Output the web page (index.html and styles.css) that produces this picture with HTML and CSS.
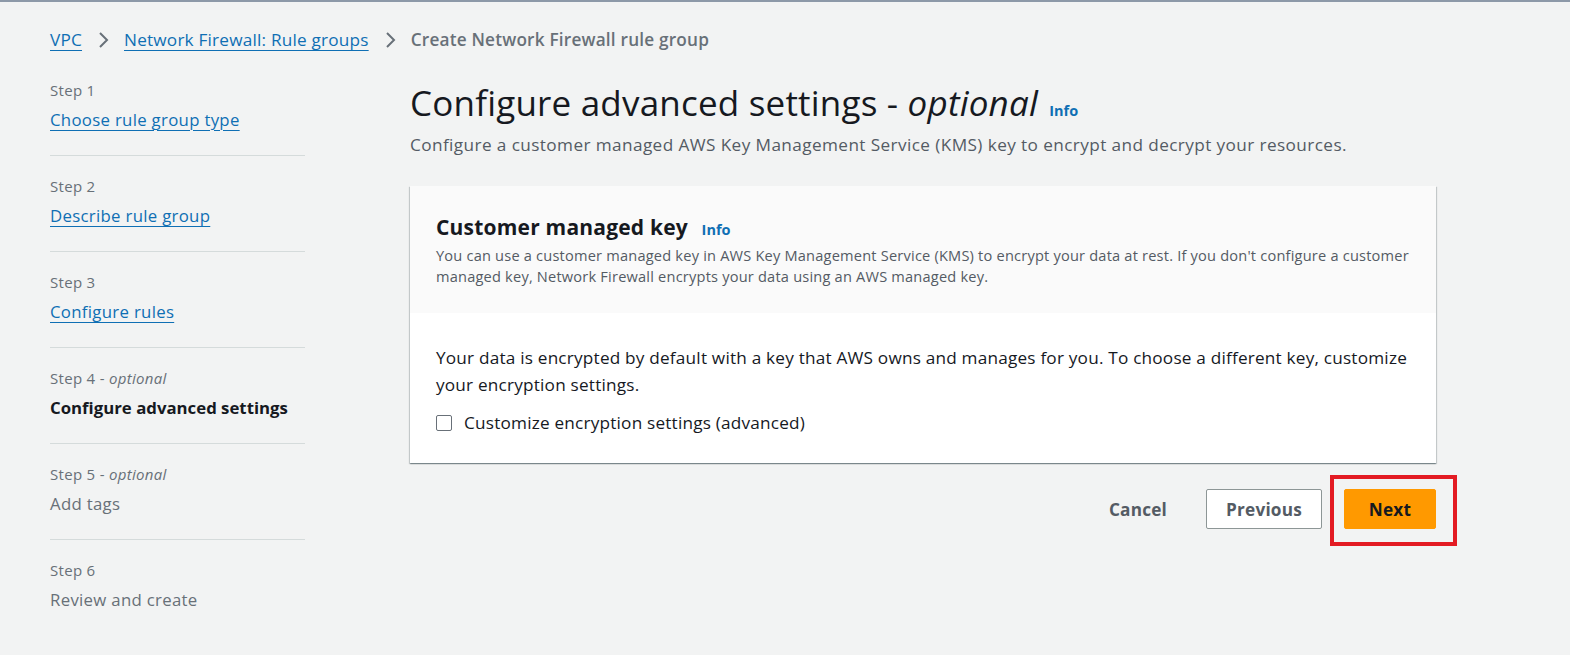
FILE: index.html
```html
<!DOCTYPE html>
<html lang="en">
<head>
<meta charset="utf-8">
<title>Create Network Firewall rule group</title>
<link rel="stylesheet" href="styles.css">
</head>
<body>
<div class="page">
  <nav class="crumbs">
    <a class="crumb-link" href="#">VPC</a>
    <svg class="chev" width="12" height="18" viewBox="0 0 12 18"><path d="M2 2l7 7-7 7" fill="none" stroke="#687078" stroke-width="2"/></svg>
    <a class="crumb-link" href="#">Network Firewall: Rule groups</a>
    <svg class="chev" width="12" height="18" viewBox="0 0 12 18"><path d="M2 2l7 7-7 7" fill="none" stroke="#687078" stroke-width="2"/></svg>
    <span class="crumb-current">Create Network Firewall rule group</span>
  </nav>
  <div class="layout">
    <ul class="steps">
      <li class="step"><div class="step-label">Step 1</div><a class="step-link" href="#">Choose rule group type</a></li>
      <li class="step"><div class="step-label">Step 2</div><a class="step-link" href="#">Describe rule group</a></li>
      <li class="step"><div class="step-label">Step 3</div><a class="step-link" href="#">Configure rules</a></li>
      <li class="step"><div class="step-label">Step 4 - <i>optional</i></div><span class="step-current">Configure advanced settings</span></li>
      <li class="step"><div class="step-label">Step 5 - <i>optional</i></div><span class="step-disabled">Add tags</span></li>
      <li class="step"><div class="step-label">Step 6</div><span class="step-disabled">Review and create</span></li>
    </ul>
    <main class="main">
      <h1 class="title">Configure advanced settings - <i>optional</i> <a class="info info-lg" href="#">Info</a></h1>
      <p class="subtitle">Configure a customer managed AWS Key Management Service (KMS) key to encrypt and decrypt your resources.</p>
      <section class="card">
        <div class="card-head">
          <h2 class="card-title">Customer managed key <a class="info" href="#">Info</a></h2>
          <p class="card-desc">You can use a customer managed key in AWS Key Management Service (KMS) to encrypt your data at rest. If you don't configure a customer managed key, Network Firewall encrypts your data using an AWS managed key.</p>
        </div>
        <div class="card-body">
          <p class="body-text">Your data is encrypted by default with a key that AWS owns and manages for you. To choose a different key, customize your encryption settings.</p>
          <label class="check"><span class="box"></span><span>Customize encryption settings (advanced)</span></label>
        </div>
      </section>
      <div class="actions">
        <button class="btn btn-link">Cancel</button>
        <button class="btn btn-normal">Previous</button>
        <div class="next-wrap">
          <button class="btn btn-primary">Next</button>
          <span class="highlight"></span>
        </div>
      </div>
    </main>
  </div>
</div>
</body>
</html>
```
FILE: styles.css
```css
* { box-sizing: border-box; }
html, body { margin: 0; padding: 0; }
body {
  background: #f2f3f3;
  border-top: 2px solid #8d99a8;
  font-family: "Open Sans", "Noto Sans", sans-serif;
  color: #16191f;
  height: 655px;
  overflow: hidden;
}
.page { padding: 26px 0 0 50px; }
a { color: #0f6fb4; }

.crumbs {
  display: flex;
  align-items: center;
  height: 24px;
  font-size: 17.2px;
  letter-spacing: 0.2px;
  line-height: 24px;
}
.crumb-link { text-decoration: underline; text-underline-offset: 4px; text-decoration-thickness: 1px; }
.chev { margin: 0 14px 0 16px; }
.crumb-current { color: #687078; font-weight: 600; }

.layout { display: flex; margin-top: 28px; }
.steps {
  list-style: none;
  margin: 0;
  padding: 0;
  width: 255px;
  flex: none;
}
.step { padding: 20px 0 23.6px; border-bottom: 1px solid #d5dbdb; }
.step:first-child { padding-top: 0; }
.step:last-child { border-bottom: none; }
.step-label { font-size: 15px; letter-spacing: 0.3px; line-height: 20px; color: #687078; }
.step-label i { font-style: italic; }
.step-link, .step-current, .step-disabled {
  display: inline-block;
  margin-top: 7.5px;
  font-size: 16.8px;
  line-height: 24px;
}
.step-link, .step-disabled { letter-spacing: 0.3px; }
.step-link { text-underline-offset: 4px; text-decoration-thickness: 1px; }
.step-current { font-weight: 700; color: #16191f; }
.step-disabled { color: #687078; }

.main { margin-left: 105px; width: 1026px; padding-top: 3px; }
.title {
  margin: 0;
  font-size: 35px;
  letter-spacing: 0.2px;
  line-height: 40px;
  font-weight: 400;
  color: #16191f;
}
.info {
  font-size: 14.5px;
  line-height: 1;
  letter-spacing: 0;
  font-weight: 700;
  text-decoration: none;
  color: #0f6fb4;
  vertical-align: baseline;
}
.info-lg { margin-left: 2px; }
.subtitle {
  margin: 10px 0 0;
  font-size: 17.2px;
  letter-spacing: 0.4px;
  line-height: 24px;
  color: #545b64;
}
.card {
  margin-top: 29px;
  background: #fff;
  box-shadow: 0 1px 1px 0 rgba(0,28,36,.3), 1px 1px 1px 0 rgba(0,28,36,.15), -1px 1px 1px 0 rgba(0,28,36,.15);
}
.card-head { background: #fafafa; padding: 27px 26px 26.5px; }
.card-title { margin: 0; font-size: 21px; letter-spacing: 0.2px; line-height: 28px; font-weight: 700; }
.card-title .info { margin-left: 8px; }
.card-desc { margin: 3.5px 0 0; font-size: 14.6px; letter-spacing: 0.2px; line-height: 21px; color: #545b64; }
.card-body { padding: 30.5px 26px 28px; }
.body-text { margin: 0; font-size: 17.2px; letter-spacing: 0.2px; line-height: 27px; color: #16191f; }
.check {
  margin-top: 13.5px;
  display: flex;
  align-items: center;
  gap: 12px;
  font-size: 17.2px;
  letter-spacing: 0.2px;
  line-height: 24px;
}
.box {
  width: 16px;
  height: 16px;
  border: 1.5px solid #687078;
  border-radius: 2px;
  background: #fff;
}

.actions {
  margin-top: 26px;
  display: flex;
  justify-content: flex-end;
  align-items: center;
}
.btn {
  font-family: inherit;
  font-size: 17.2px;
  letter-spacing: 0.2px;
  font-weight: 700;
  height: 40px;
  border-radius: 2px;
  cursor: pointer;
}
.btn-link { background: none; border: none; color: #545b64; padding: 0 20px; margin-right: 19px; }
.btn-normal {
  background: #fff;
  border: 1px solid #8d9696;
  color: #545b64;
  width: 116px;
}
.next-wrap { position: relative; margin-left: 22px; }
.btn-primary {
  background: #ff9900;
  border: 1px solid #ff9900;
  color: #16191f;
  width: 92px;
  display: block;
}
.highlight {
  position: absolute;
  left: -14px;
  top: -14px;
  right: -21px;
  bottom: -17px;
  border: 4px solid #e31b23;
  pointer-events: none;
}
```
